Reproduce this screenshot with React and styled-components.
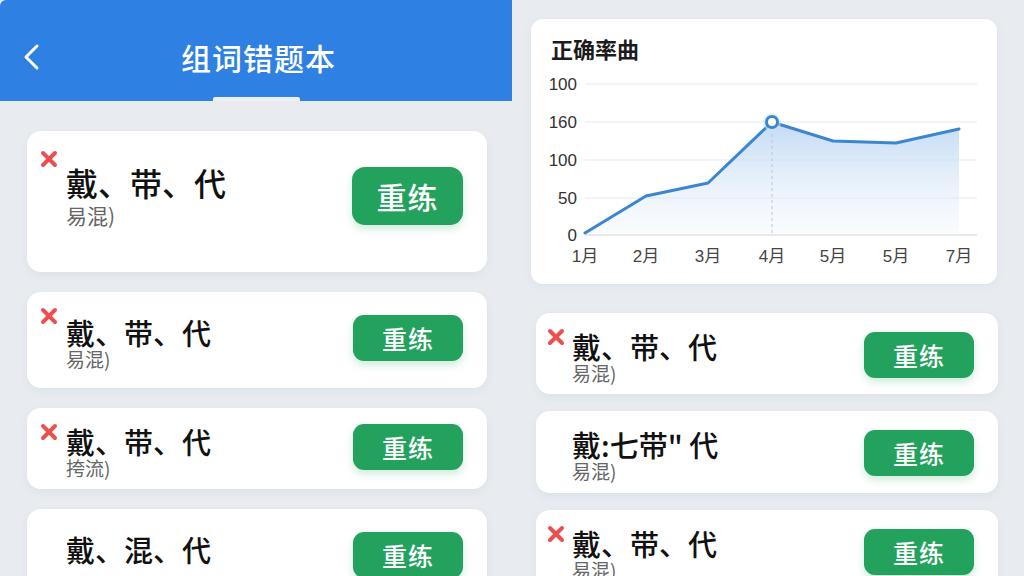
import React from 'react'
import styled, { createGlobalStyle } from 'styled-components'

const GlobalStyle = createGlobalStyle`
  html, body {
    margin: 0;
    padding: 0;
    background: #e8ecf1;
  }
  body {
    font-family: "Noto Sans CJK SC", "Noto Sans", sans-serif;
  }
`

// DATA
const leftItems = [
  { id: 1, wrong: true, word: '戴、带、代', hint: '易混)', size: 'lg', height: 141 },
  { id: 2, wrong: true, word: '戴、带、代', hint: '易混)', size: 'md', height: 96 },
  { id: 3, wrong: true, word: '戴、带、代', hint: '挎流)', size: 'md', height: 81 },
  { id: 4, wrong: false, word: '戴、混、代', hint: '\u00a0', size: 'md', height: 96 },
]

const rightItems = [
  { id: 5, wrong: true, word: '戴、带、代', hint: '易混)', size: 'md', height: 81 },
  { id: 6, wrong: false, word: '戴:七带" 代', hint: '易混)', size: 'md', height: 82 },
  { id: 7, wrong: true, word: '戴、带、代', hint: '易混)', size: 'md', height: 82 },
]

const points = [
  [54, 163], [115, 126], [177, 113], [241, 52], [302, 71], [365, 73], [428, 59],
]
const yTicks = [
  { label: '100', y: 14 },
  { label: '160', y: 52 },
  { label: '100', y: 90 },
  { label: '50', y: 128 },
  { label: '0', y: 165 },
]
const xTicks = ['1月', '2月', '3月', '4月', '5月', '5月', '7月']

const WrongMark = () => (
  <svg width='18' height='18' viewBox='0 0 18 18'>
    <path d='M3 3 L15 15 M15 3 L3 15' stroke='#e9504f' strokeWidth='4' strokeLinecap='round' />
  </svg>
)

const BackIcon = () => (
  <svg width='20' height='28' viewBox='0 0 20 28'>
    <path d='M15 3 L4 14 L15 25' fill='none' stroke='#fff' strokeWidth='3' strokeLinecap='round' strokeLinejoin='round' />
  </svg>
)

const MistakeCard = ({ item, side }) => (
  <Card $height={item.height} $side={side}>
    {item.wrong && (
      <Mark $size={item.size} $side={side}>
        <WrongMark />
      </Mark>
    )}
    <Info $size={item.size}>
      <Word $size={item.size}>{item.word}</Word>
      <Hint $size={item.size}>{item.hint}</Hint>
    </Info>
    <RetryButton $size={item.size} $side={side}>重练</RetryButton>
  </Card>
)

const AccuracyChart = () => {
  const line = points.map(p => p.join(',')).join(' ')
  const area = `M54,165 L${line.split(' ').join(' L')} L428,165 Z`

  return (
    <ChartSvg viewBox='0 0 466 200'>
      <defs>
        <linearGradient id='areaFill' x1='0' y1='0' x2='0' y2='1'>
          <stop offset='0%' stopColor='#bcd6f3' stopOpacity='0.9' />
          <stop offset='100%' stopColor='#e6f0fb' stopOpacity='0.2' />
        </linearGradient>
      </defs>
      {yTicks.map((t, i) => (
        <g key={i}>
          <line x1='54' x2='446' y1={t.y} y2={t.y} stroke='#e6e9ee' strokeWidth='1' />
          <text x='46' y={t.y + 6} textAnchor='end' fontSize='17' fill='#333'>{t.label}</text>
        </g>
      ))}
      <line x1='54' x2='446' y1='165' y2='165' stroke='#d9dde3' strokeWidth='1' />
      <path d={area} fill='url(#areaFill)' />
      <line x1='241' x2='241' y1='52' y2='165' stroke='#b9c7d8' strokeWidth='1' strokeDasharray='3 3' />
      <polyline points={line} fill='none' stroke='#3b86cf' strokeWidth='3' strokeLinejoin='round' strokeLinecap='round' />
      <circle cx='241' cy='52' r='9' fill='#cfe2f6' opacity='0.6' />
      <circle cx='241' cy='52' r='5.5' fill='#fff' stroke='#3b86cf' strokeWidth='3' />
      {xTicks.map((label, i) => (
        <text key={i} x={points[i][0]} y='192' textAnchor='middle' fontSize='17' fill='#444'>{label}</text>
      ))}
    </ChartSvg>
  )
}

const App = () => {
  return (
    <>
      <GlobalStyle />
      <Page>
        <LeftColumn>
          <Header>
            <BackButton><BackIcon /></BackButton>
            <HeaderTitle>组词错题本</HeaderTitle>
            <TabIndicator />
          </Header>
          <CardList $pad='30px 25px 0 27px' $gap='20px'>
            {leftItems.map(item => <MistakeCard key={item.id} item={item} side='left' />)}
          </CardList>
        </LeftColumn>

        <RightColumn>
          <ChartCard>
            <ChartTitle>正确率曲</ChartTitle>
            <AccuracyChart />
          </ChartCard>
          <CardList $pad='0 26px 0 5px' $gap='17px'>
            {rightItems.map(item => <MistakeCard key={item.id} item={item} side='right' />)}
          </CardList>
        </RightColumn>
      </Page>
    </>
  )
}

const Page = styled.div`
  width: 1024px;
  height: 576px;
  overflow: hidden;
  display: grid;
  grid-template-columns: 512px 1fr;
  background: #e8ecf1;
`

const LeftColumn = styled.div`
  display: flex;
  flex-direction: column;
`

const Header = styled.header`
  position: relative;
  height: 101px;
  background: #2e80e2;
  border-top-left-radius: 6px;
  display: flex;
  align-items: center;
  justify-content: center;
`

const BackButton = styled.div`
  position: absolute;
  left: 22px;
  top: 43px;
  display: flex;
`

const HeaderTitle = styled.h1`
  margin: 0 0 0 5px;
  padding-top: 12px;
  font-size: 30px;
  font-weight: 500;
  color: #fff;
  letter-spacing: 1px;
`

const TabIndicator = styled.span`
  position: absolute;
  left: 213px;
  bottom: 0;
  width: 87px;
  height: 4px;
  background: #edf1f6;
  border-radius: 2px 2px 0 0;
`

const RightColumn = styled.div`
  display: flex;
  flex-direction: column;
  gap: 29px;
  padding: 19px 0 0 19px;
`

const ChartCard = styled.section`
  width: 466px;
  height: 265px;
  box-sizing: border-box;
  padding: 14px 0 0 0;
  background: #fff;
  border-radius: 12px;
  box-shadow: 0 2px 10px rgba(40, 60, 90, 0.05);
`

const ChartTitle = styled.h2`
  margin: 0 0 0 20px;
  height: 37px;
  font-size: 22px;
  line-height: 30px;
  font-weight: 700;
  color: #1c1c1c;
`

const ChartSvg = styled.svg`
  display: block;
  width: 466px;
  height: 200px;
  font-family: "Liberation Sans", "Noto Sans CJK SC", sans-serif;
`

const CardList = styled.div`
  display: flex;
  flex-direction: column;
  gap: ${p => p.$gap};
  padding: ${p => p.$pad};
`

const Card = styled.div`
  position: relative;
  flex-shrink: 0;
  height: ${p => p.$height}px;
  box-sizing: border-box;
  padding: 0 24px 0 ${p => (p.$side === 'left' ? 39 : 36)}px;
  display: flex;
  align-items: center;
  justify-content: space-between;
  background: #fff;
  border-radius: 14px;
  box-shadow: 0 3px 10px rgba(40, 60, 90, 0.06);
`

const Mark = styled.span`
  position: absolute;
  left: ${p => (p.$side === 'left' ? 13 : 11)}px;
  top: ${p => (p.$size === 'lg' ? 19 : 15)}px;
  display: flex;
`

const Info = styled.div`
  display: flex;
  flex-direction: column;
  margin-top: ${p => (p.$size === 'lg' ? -14 : 4)}px;
`

const Word = styled.div`
  font-size: ${p => (p.$size === 'lg' ? 32 : 29)}px;
  line-height: ${p => (p.$size === 'lg' ? 40 : 34)}px;
  font-weight: 500;
  color: #111;
`

const Hint = styled.div`
  font-size: ${p => (p.$size === 'lg' ? 21 : 19)}px;
  line-height: ${p => (p.$size === 'lg' ? 26 : 20)}px;
  color: #666;
`

const RetryButton = styled.button`
  width: ${p => (p.$size === 'lg' ? 111 : 110)}px;
  height: ${p => (p.$size === 'lg' ? 58 : 46)}px;
  margin-top: ${p => (p.$size === 'lg' ? -12 : p.$side === 'right' ? 2 : -4)}px;
  border: none;
  border-radius: ${p => (p.$size === 'lg' ? 13 : 11)}px;
  background: #22a25c;
  color: #fff;
  font-family: inherit;
  font-size: ${p => (p.$size === 'lg' ? 30 : 25)}px;
  font-weight: 500;
  letter-spacing: 1px;
  box-shadow: 0 4px 8px rgba(34, 162, 92, 0.22);
`

export default App
